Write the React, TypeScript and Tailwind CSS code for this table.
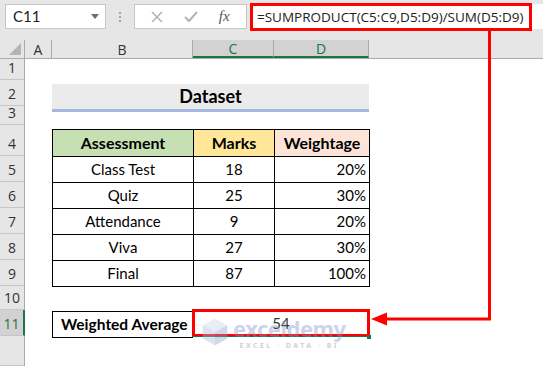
import React from "react";

const rowHeads = [
  { n: "1", h: 21 },
  { n: "2", h: 26 },
  { n: "3", h: 19 },
  { n: "4", h: 31 },
  { n: "5", h: 26 },
  { n: "6", h: 26 },
  { n: "7", h: 26 },
  { n: "8", h: 26 },
  { n: "9", h: 26 },
  { n: "10", h: 24 },
  { n: "11", h: 26, active: true },
  { n: "", h: 30 },
];

const data = [
  { name: "Class Test", marks: "18", weight: "20%" },
  { name: "Quiz", marks: "25", weight: "30%" },
  { name: "Attendance", marks: "9", weight: "20%" },
  { name: "Viva", marks: "27", weight: "30%" },
  { name: "Final", marks: "87", weight: "100%" },
];

function Toolbar() {
  return (
    <div className="h-[40px] bg-[#e6e6e6] flex items-start pt-[4px] pl-[5px]">
      {/* name box */}
      <div className="w-[101px] h-[25px] bg-white border border-[#c6c6c6] flex items-center pl-[7px] pr-[6px] text-[15px] text-[#222]">
        <span className="flex-1">C11</span>
        <svg width="8" height="5" viewBox="0 0 8 5">
          <path d="M0 0 H8 L4 5 Z" fill="#6d6d6d" />
        </svg>
      </div>
      <div className="w-[28px] h-[25px] flex flex-col items-center justify-center gap-[2px]">
        <div className="w-[2px] h-[2px] bg-[#a6a6a6]" />
        <div className="w-[2px] h-[2px] bg-[#a6a6a6]" />
        <div className="w-[2px] h-[2px] bg-[#a6a6a6]" />
      </div>
      {/* cancel / enter / fx */}
      <div className="w-[113px] h-[25px] bg-white border border-[#c6c6c6] flex items-center justify-around px-[6px]">
        <svg width="12" height="12" viewBox="0 0 12 12">
          <path d="M1 1 L11 11 M11 1 L1 11" stroke="#b4b4b4" strokeWidth="1.6" />
        </svg>
        <svg width="14" height="12" viewBox="0 0 14 12">
          <path d="M1 6 L5 10 L13 1" stroke="#b4b4b4" strokeWidth="2" fill="none" />
        </svg>
        <span className="text-[15px] italic text-[#555] font-['Liberation_Serif',serif]">fx</span>
      </div>
      {/* formula input */}
      <div className="ml-[3px] flex-1 h-[25px] bg-white relative">
        <div className="absolute left-0 top-[-1px] w-[282px] h-[28px] border-[3px] border-[#ff0000] flex items-center pl-[4px] text-[13.5px] text-[#222] whitespace-nowrap overflow-hidden font-['Open_Sans',sans-serif]">
          =SUMPRODUCT(C5:C9,D5:D9)/SUM(D5:D9)
        </div>
      </div>
    </div>
  );
}

function ColumnHeader() {
  const cols = [
    { l: "A", w: 27 },
    { l: "B", w: 141 },
    { l: "C", w: 81, sel: true },
    { l: "D", w: 95, sel: true },
  ];
  return (
    <div className="h-[19px] flex bg-[#e6e6e6] border-b border-[#ababab] text-[14px] font-['Open_Sans',sans-serif]">
      <div className="w-[25px] border-r border-[#ababab] flex items-end justify-end p-[3px]">
        <svg width="12" height="12" viewBox="0 0 12 12">
          <path d="M12 0 V12 H0 Z" fill="#b4b4b4" />
        </svg>
      </div>
      {cols.map((c) => (
        <div
          key={c.l}
          style={{ width: c.w }}
          className={
            c.sel
              ? "border-r border-[#ababab] bg-[#d2d2d2] border-b-2 border-b-[#217346] text-[#217346] flex items-center justify-center"
              : "border-r border-[#ababab] text-[#333] flex items-center justify-center"
          }
        >
          {c.l}
        </div>
      ))}
      <div className="flex-1" />
    </div>
  );
}

function Logo() {
  return (
    <div className="absolute left-[200px] top-[317px] flex items-start gap-[3px] opacity-40 pointer-events-none">
      <svg width="30" height="30" viewBox="0 0 32 32">
        <path d="M16 2 L29 9 L29 23 L16 30 L3 23 L3 9 Z" fill="#aab8d8" />
        <path d="M16 2 L29 9 L16 16 L3 9 Z" fill="#c9d3ea" />
        <path d="M16 16 L29 9 L29 23 L16 30 Z" fill="#8d9fc9" />
      </svg>
      <div className="flex flex-col items-center leading-none">
        <span className="text-[22px] font-bold text-[#7f95c9] font-['Noto_Sans',sans-serif] tracking-[-0.5px]">exceldemy</span>
        <span className="text-[7px] tracking-[2.5px] text-[#8c8c8c] mt-[3px] font-['Noto_Sans',sans-serif] font-bold">EXCEL · DATA · BI</span>
      </div>
    </div>
  );
}

export default function App() {
  return (
    <div className="w-[543px] h-[366px] overflow-hidden relative bg-white font-['Lato',sans-serif]">
      <Toolbar />
      <ColumnHeader />
      <div className="flex">
        {/* row headers */}
        <div className="w-[25px] bg-[#e6e6e6] border-r border-[#ababab] flex flex-col font-['Open_Sans',sans-serif] text-[14px]">
          {rowHeads.map((r, i) => (
            <div
              key={i}
              style={{ height: r.h }}
              className={
                r.active
                  ? "border-b border-[#c6c6c6] bg-[#d2d2d2] border-r-2 border-r-[#217346] -mr-px text-[#217346] flex items-end justify-center pb-[1px]"
                  : "border-b border-[#c6c6c6] text-[#333] flex items-end justify-center pb-[1px]"
              }
            >
              {r.n}
            </div>
          ))}
        </div>

        {/* sheet content */}
        <div className="flex-1 flex flex-col pl-[27px] text-[15px] text-black">
          <div className="h-[25px]" />
          <div className="w-[317px] h-[28px] bg-[#ebebeb] border-b-[3px] border-[#a4b8e0] flex items-center justify-center text-[18px] font-bold">
            Dataset
          </div>
          <div className="h-[17px]" />
          <div className="w-[318px] border-l border-t border-black">
            <div className="flex h-[27px] font-bold text-[16px]">
              <div className="w-[141px] bg-[#c6e0b4] border-r border-b border-black flex items-center justify-center">Assessment</div>
              <div className="w-[81px] bg-[#ffe699] border-r border-b border-black flex items-center justify-center">Marks</div>
              <div className="w-[95px] bg-[#fce4d6] border-r border-b border-black flex items-center justify-center">Weightage</div>
            </div>
            {data.map((d) => (
              <div key={d.name} className="flex h-[26px]">
                <div className="w-[141px] border-r border-b border-black flex items-center justify-center">{d.name}</div>
                <div className="w-[81px] border-r border-b border-black flex items-center justify-center">{d.marks}</div>
                <div className="w-[95px] border-r border-b border-black flex items-center justify-end pr-[3px]">{d.weight}</div>
              </div>
            ))}
          </div>
          <div className="h-[22px]" />
          <div className="flex items-start">
            <div className="w-[141px] h-[27px] mt-[2px] border border-black flex items-center pl-[8px] font-bold text-[15.5px]">
              Weighted Average
            </div>
            <div className="relative w-[178px] h-[28px] -ml-px border-[3px] border-[#ff0000] flex items-center justify-center text-[#333]">
              54
              <div className="absolute left-[-3px] right-[-3px] bottom-[-3px] h-[1px] bg-[#217346]" />
              <div className="absolute right-[-4px] bottom-[-5px] w-[4px] h-[4px] bg-[#217346]" />
            </div>
          </div>
        </div>
      </div>

      <Logo />

      {/* red connector arrow */}
      <svg className="absolute left-0 top-0 pointer-events-none" width="543" height="366">
        <path d="M489.5 30 V319 H384" stroke="#ff0000" strokeWidth="3" fill="none" />
        <path d="M371 319 L387 312.5 L387 325.5 Z" fill="#ff0000" />
      </svg>
    </div>
  );
}
